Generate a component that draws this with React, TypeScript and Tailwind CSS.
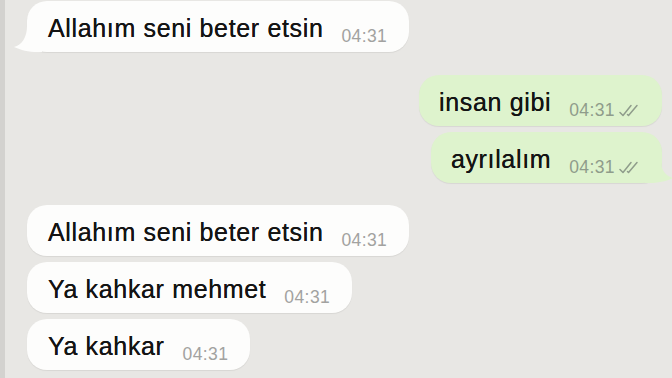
import React from "react";

type Msg = { text: string; mine?: boolean; tail?: boolean };

const font = { fontFamily: '"Liberation Sans", Arial, sans-serif' };

const Ticks = () => (
  <svg width="24" height="13" viewBox="0 0 24 13" className="shrink-0">
    <path d="M1 8.5 L4 11.5 L12 1.5" fill="none" stroke="#8f9c8b" strokeWidth="1.5" strokeLinecap="round" strokeLinejoin="round" />
    <path d="M8.5 10.5 L9.5 11.5 L18 1.5" fill="none" stroke="#8f9c8b" strokeWidth="1.5" strokeLinecap="round" strokeLinejoin="round" />
  </svg>
);

const Tail = ({ color, right }: { color: string; right?: boolean }) => (
  <svg
    width="28"
    height="28"
    viewBox="0 0 28 28"
    className={
      right
        ? "absolute right-[-11px] bottom-0 -scale-x-100"
        : "absolute left-[-13px] bottom-0"
    }
  >
    <path d="M13 2 C13 13 8 21 0 23 C7 26 14 28 24 28 L28 28 L28 2 Z" fill={color} />
  </svg>
);

const Bubble = ({ text, mine, tail }: Msg) => (
  <div
    className={
      mine
        ? "relative self-end flex items-end h-[51px] pt-[15px] pb-[11px] pl-[20px] pr-[19px] rounded-[20px] bg-[#def3cd] shadow-[0_1px_1px_rgba(0,0,0,0.07)]"
        : "relative self-start flex items-end h-[51px] pt-[15px] pb-[11px] pl-[21px] pr-[22px] rounded-[20px] bg-[#fdfdfc] shadow-[0_1px_1px_rgba(0,0,0,0.07)]"
    }
  >
    {tail && <Tail color={mine ? "#def3cd" : "#fdfdfc"} right={mine} />}
    <span className="relative text-[25px] leading-[25px] tracking-[0.65px] text-[#141414] whitespace-nowrap [text-shadow:0_0_0.4px_#141414]">
      {text}
    </span>
    <span
      className={
        mine
          ? "relative ml-[18px] mb-[-4px] flex items-center gap-[4px] text-[17.5px] leading-[17px] tracking-[0.4px] text-[#8f9c8b]"
          : "relative ml-[18px] mb-[-4px] text-[17.5px] leading-[17px] tracking-[0.4px] text-[#a2a2a0]"
      }
    >
      04:31
      {mine && <Ticks />}
    </span>
  </div>
);

export default function App() {
  return (
    <div className="w-[672px] h-[378px] overflow-hidden flex bg-[#e8e7e4]" style={font}>
      <div className="w-[5px] shrink-0 bg-[#d3d2cf]" />
      <div className="flex-1 flex flex-col pt-[1px] pl-[22px] pr-[10px]">
        <Bubble text="Allahım seni beter etsin" tail />
        <div className="h-[23px]" />
        <Bubble text="insan gibi" mine />
        <div className="h-[6px]" />
        <Bubble text="ayrılalım" mine tail />
        <div className="h-[22px]" />
        <div className="flex flex-col gap-[6px]">
          <Bubble text="Allahım seni beter etsin" />
          <Bubble text="Ya kahkar mehmet" />
          <Bubble text="Ya kahkar" />
        </div>
      </div>
    </div>
  );
}
